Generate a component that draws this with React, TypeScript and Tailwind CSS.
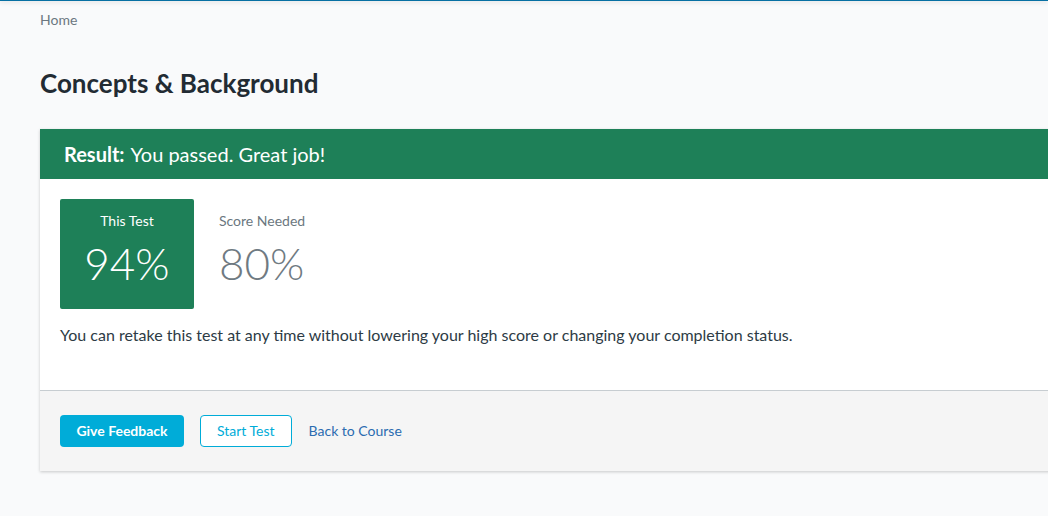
export default function App() {
  return (
    <div className="h-[516px] w-[1048px] overflow-hidden bg-[#f9fafb] font-['Lato',sans-serif] text-[#2d3b45]">
      <div className="h-px bg-[#0770a3] shadow-[0_1px_4px_rgba(0,0,0,0.25)]" />
      <div className="pl-10">
        <div className="pt-[10px] text-[14px] leading-[18px] text-[#6b7780]">Home</div>
        <h1 className="mt-[38px] text-[26px] font-bold leading-[32px] text-[#222b33]">Concepts &amp; Background</h1>
        <div className="mt-[30px] w-[1040px] bg-white shadow-[0_1px_3px_rgba(0,0,0,0.2)]">
          <div className="flex h-[50px] items-center bg-[#1e8058] px-6 text-[20px] text-white">
            <span className="font-bold">Result:</span>
            <span className="ml-[6px]">You passed. Great job!</span>
          </div>
          <div className="px-5 pt-5 pb-[43px]">
            <div className="flex items-start gap-[25px]">
              <div className="flex h-[110px] w-[134px] flex-col items-center rounded-[2px] bg-[#1e8058] pt-[12px] text-white">
                <div className="text-[14px] leading-[20px]">This Test</div>
                <div className="mt-[5px] text-[44px] font-light leading-[54px]">94%</div>
              </div>
              <div className="flex flex-col items-start pt-[12px] text-[#6b7780]">
                <div className="text-[14px] leading-[20px]">Score Needed</div>
                <div className="mt-[5px] text-[44px] font-light leading-[54px] text-[#6f7a82]">80%</div>
              </div>
            </div>
            <p className="mt-[14px] text-[16px] leading-[24px]">
              You can retake this test at any time without lowering your high score or changing your completion status.
            </p>
          </div>
          <div className="flex items-center gap-4 border-t border-[#c7cdd1] bg-[#f5f5f5] px-5 pt-[24px] pb-[24px]">
            <button className="h-8 w-[124px] rounded-[4px] bg-[#00acd8] pb-[2px] text-[14px] font-bold text-white">Give Feedback</button>
            <button className="h-8 rounded-[4px] border border-[#00acd8] bg-white px-[16px] pb-[2px] text-[14px] text-[#00acd8]">Start Test</button>
            <a className="ml-px pb-[2px] text-[14px] text-[#2b6cb0]">Back to Course</a>
          </div>
        </div>
      </div>
    </div>
  );
}
